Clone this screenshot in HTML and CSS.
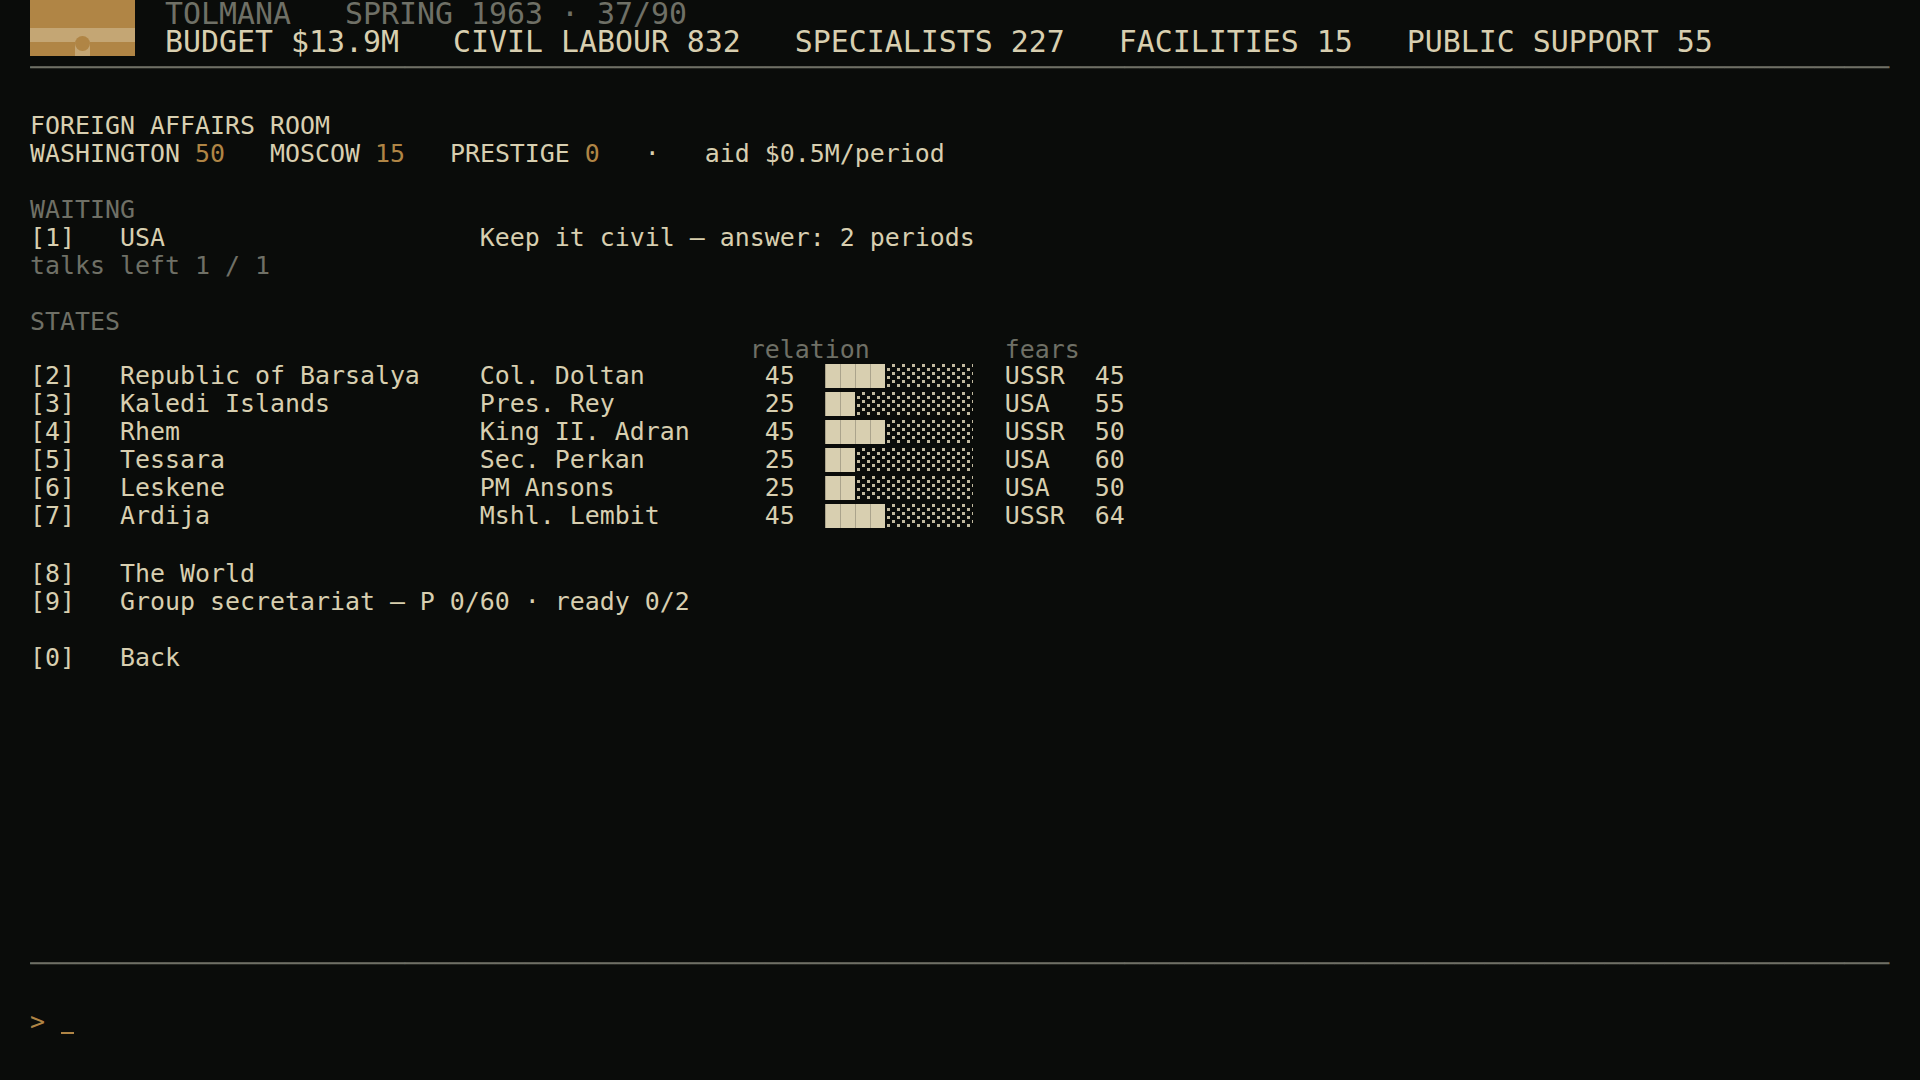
FILE: index.html
```html
<!DOCTYPE html>
<html lang="en">
<head>
    <meta charset="UTF-8">
    <title>TOLMANA | Foreign Affairs Room</title>
    <link rel="stylesheet" href="styles.css">
</head>
<body>
    <header class="status">
        <svg class="emblem" width="105" height="56" viewBox="0 0 105 56">
            <rect width="105" height="56" fill="#b08545"/>
            <rect y="28" width="105" height="14" fill="#c4a674"/>
            <rect x="45" y="42" width="15" height="14" fill="#c4a674"/>
            <circle cx="52.5" cy="43.5" r="7.5" fill="#b08545"/>
        </svg>
        <div class="status-text">
            <div class="line dim">TOLMANA   SPRING 1963 · 37/90</div>
            <div class="line">BUDGET $13.9M   CIVIL LABOUR 832   SPECIALISTS 227   FACILITIES 15   PUBLIC SUPPORT 55</div>
        </div>
    </header>
    <div class="line rule">────────────────────────────────────────────────────────────────────────────────────────────────────────────────────────────</div>

    <main class="screen">
        <div class="line"> </div>
        <div class="line">FOREIGN AFFAIRS ROOM</div>
        <div class="line">WASHINGTON <span class="amber">50</span>   MOSCOW <span class="amber">15</span>   PRESTIGE <span class="amber">0</span>   ·   aid $0.5M/period</div>
        <div class="line"> </div>
        <div class="line dim">WAITING</div>
        <div class="line">[1]   USA                     Keep it civil — answer: 2 periods</div>
        <div class="line dim">talks left 1 / 1</div>
        <div class="line"> </div>
        <div class="line dim">STATES</div>
        <div class="line dim">                                                relation         fears</div>
        <div class="states">
            <div class="line">[2]   Republic of Barsalya    Col. Doltan        45  <span class="bar"><span class="bar-fill" style="width: 60px"></span></span>  USSR  45</div>
            <div class="line">[3]   Kaledi Islands          Pres. Rey          25  <span class="bar"><span class="bar-fill" style="width: 30px"></span></span>  USA   55</div>
            <div class="line">[4]   Rhem                    King II. Adran     45  <span class="bar"><span class="bar-fill" style="width: 60px"></span></span>  USSR  50</div>
            <div class="line">[5]   Tessara                 Sec. Perkan        25  <span class="bar"><span class="bar-fill" style="width: 30px"></span></span>  USA   60</div>
            <div class="line">[6]   Leskene                 PM Ansons          25  <span class="bar"><span class="bar-fill" style="width: 30px"></span></span>  USA   50</div>
            <div class="line">[7]   Ardija                  Mshl. Lembit       45  <span class="bar"><span class="bar-fill" style="width: 60px"></span></span>  USSR  64</div>
        </div>
        <div class="line"> </div>
        <div class="line">[8]   The World</div>
        <div class="line">[9]   Group secretariat — P 0/60 · ready 0/2</div>
        <div class="line"> </div>
        <div class="line">[0]   Back</div>
    </main>

    <div class="line rule">────────────────────────────────────────────────────────────────────────────────────────────────────────────────────────────</div>
    <footer class="prompt line"><span class="amber">&gt;</span> <span class="cursor"></span></footer>
</body>
</html>
```

FILE: styles.css
```css
:root {
    --bg: #0a0c0a;
    --text: #d8cfb0;
    --dot: #c2baa0;
    --dim: #6f7066;
    --amber: #b08545;
}

* {
    margin: 0;
    padding: 0;
    box-sizing: border-box;
}

body {
    background: var(--bg);
    color: var(--text);
    font-family: "DejaVu Sans Mono", monospace;
    font-size: 24.915px;
    line-height: 28px;
    height: 100vh;
    padding: 0 30px;
    overflow: hidden;
    display: flex;
    flex-direction: column;
}

.line {
    white-space: pre;
    height: 28px;
}

.status {
    display: flex;
    gap: 30px;
    height: 54px;
}

.emblem {
    display: block;
    flex: none;
}

.status-text {
    font-size: 29.9px;
}

.rule {
    color: var(--dim);
    overflow: hidden;
}

.screen {
    flex: 1;
    padding-top: 2px;
}

.states {
    margin: -2px 0 2px;
}

.prompt {
    height: 102px;
    padding-top: 30px;
}

/* dots: a 5x4 checker with bg-coloured lines laid over it */
.bar {
    display: inline-block;
    vertical-align: top;
    width: 148px;
    height: 24px;
    margin: 2px 2px 0 0;
    background:
        repeating-linear-gradient(90deg, var(--bg) 0 2px, transparent 2px 5px),
        repeating-linear-gradient(0deg, var(--bg) 0 1px, transparent 1px 4px),
        conic-gradient(var(--dot) 25%, transparent 0 50%, var(--dot) 0 75%, transparent 0) 0 0 / 10px 8px;
}

.bar-fill {
    display: block;
    height: 24px;
    background: repeating-linear-gradient(90deg, #aba48c 0 1px, var(--text) 1px 15px);
}

.cursor {
    display: inline-block;
    width: 13px;
    height: 2px;
    margin-left: 1px;
    vertical-align: -4px;
    background: var(--amber);
}

.dim {
    color: var(--dim);
}

.amber {
    color: var(--amber);
}
```
